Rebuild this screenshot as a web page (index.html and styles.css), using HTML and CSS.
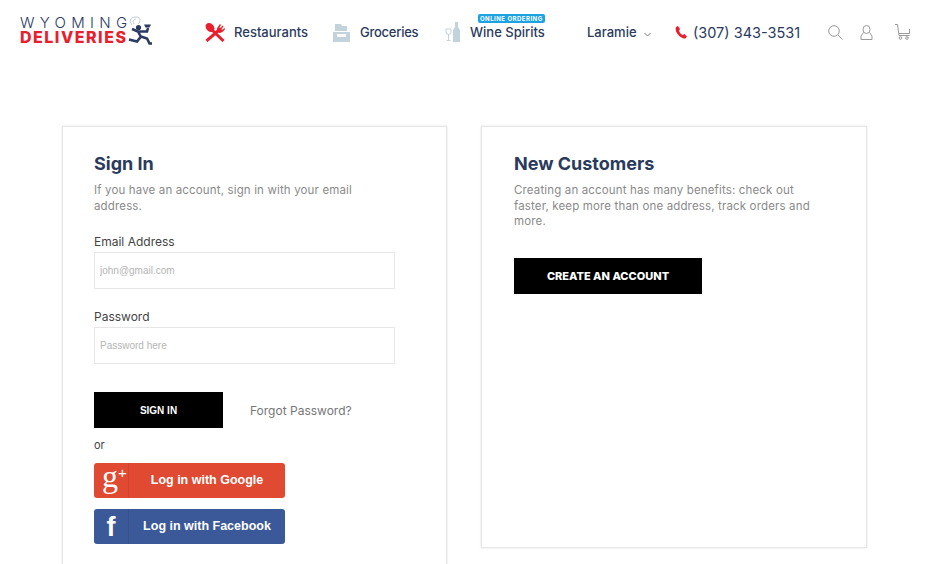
FILE: index.html
```html
<!DOCTYPE html>
<html lang="en">
<head>
    <meta charset="UTF-8">
    <meta name="viewport" content="width=device-width, initial-scale=1.0">
    <title>Wyoming Deliveries - Sign In</title>
    <link rel="stylesheet" href="styles.css">
</head>
<body>
    <div class="header">
        <a class="logo" href="#">
            <span class="logo-text">
                <span class="logo-top">WYOMING</span>
                <span class="logo-bottom">DELIVERIES</span>
            </span>
            <svg class="logo-runner" width="27" height="32" viewBox="0 0 27 32">
                <path d="M6 11C2 5 6 3 10 3C15 3 15 8 12 10M8 10C6 7 8 5 10 5" fill="none" stroke="#c3ccd3"/>
                <circle cx="12.500" cy="13.500" r="2.600" fill="#2a3a63"/>
                <path d="M18 10.500h7l-1.500 3h-4z" fill="#2a3a63"/>
                <path d="M12 17.500L15 23M12 17.500H21L22 14M12 17.500L6 15M15 22.500L21 24.500L23.500 29.500H26M15 22.500L11 27.500L3 25.500" fill="none" stroke="#2a3a63" stroke-width="2.600"/>
            </svg>
        </a>
        <nav class="nav">
            <a class="nav-item nav-restaurants" href="#">
                <svg width="20" height="20" viewBox="0 0 20 20">
                    <path d="M5 6L18.500 19" stroke="#e8202e" stroke-width="3" fill="none"/>
                    <ellipse cx="5" cy="5.500" rx="3.800" ry="5" transform="rotate(-45 5 5.500)" fill="#e8202e"/>
                    <path d="M14 8L1.500 19" stroke="#e8202e" stroke-width="3" fill="none"/>
                    <path d="M12 8.500C11.500 6 13 5 15 2L16 3L14.500 5.500L15.500 6L17.500 3.500L18.500 4.500L16.500 7L17 8L19.500 6L20 7C18 10 16 11 14 11z" fill="#e8202e"/>
                </svg>
                Restaurants
            </a>
            <a class="nav-item nav-groceries" href="#">
                <svg width="17" height="19" viewBox="0 0 17 19">
                    <path d="M2 1h6l1 2h5v5H2z" fill="#c3d3db"/>
                    <path d="M0 9h17v10H0z" fill="#c3d3db"/>
                    <path d="M4 11h9v3H4z" fill="#fff"/>
                </svg>
                Groceries
            </a>
            <a class="nav-item nav-wine" href="#">
                <svg width="16" height="20" viewBox="0 0 16 20">
                    <path d="M1 7h5v3a2.500 2.500 0 0 1-5 0z" fill="none" stroke="#c3d3db"/>
                    <path d="M3.500 12v6.500M1.500 18.500h4" stroke="#c3d3db" fill="none"/>
                    <path d="M10 0h3v5l2 3v12H8V8l2-3z" fill="#c3d3db"/>
                </svg>
                <span class="wine-label">
                    <span class="badge">ONLINE ORDERING</span>
                    Wine Spirits
                </span>
            </a>
        </nav>
        <a class="city" href="#">
            Laramie
            <svg class="city-arrow" width="7" height="5" viewBox="0 0 7 5"><path d="M.5 1l3 3 3-3" fill="none" stroke="#777"/></svg>
        </a>
        <a class="phone" href="#">
            <svg width="12" height="13" viewBox="0 0 12 13">
                <path d="M1 1l2-1 2 3-1 2c.5 1.500 2 3 3.500 4l2-1 2.500 2.500-1.500 2C6 13-1 6 1 1z" fill="#e8202e"/>
            </svg>
            (307) 343-3531
        </a>
        <div class="header-icons">
            <svg width="15" height="15" viewBox="0 0 15 15">
                <circle cx="6" cy="6" r="5.300" fill="none" stroke="#999"/>
                <path d="M10 10l4.500 4.500" stroke="#999" fill="none"/>
            </svg>
            <svg width="13" height="15" viewBox="0 0 13 15">
                <ellipse cx="6.500" cy="4.500" rx="3.500" ry="4" fill="none" stroke="#999"/>
                <path d="M3.500 7.500L1 11v3.500h11V11L9.500 7.500" fill="none" stroke="#999"/>
            </svg>
            <svg class="cart-icon" width="15" height="16" viewBox="0 0 15 16">
                <path d="M0 .5h2.500l1.500 11h10.500M4 9.500h10.500V5" fill="none" stroke="#999"/>
                <circle cx="5.500" cy="14" r="1.300" fill="none" stroke="#999"/>
                <circle cx="12" cy="14" r="1.300" fill="none" stroke="#999"/>
            </svg>
        </div>
    </div>

    <div class="account">
        <div class="card card-signin">
            <h2>Sign In</h2>
            <p class="intro">If you have an account, sign in with your email address.</p>
            <div class="field">
                <label for="email">Email Address</label>
                <input type="text" id="email" placeholder="john@gmail.com">
            </div>
            <div class="field">
                <label for="password">Password</label>
                <input type="text" id="password" placeholder="Password here">
            </div>
            <div class="signin-row">
                <button class="btn btn-signin">SIGN IN</button>
                <a class="forgot" href="#">Forgot Password?</a>
            </div>
            <div class="or">or</div>
            <a class="social social-google" href="#">
                <span class="social-icon google-icon">g<sup>+</sup></span>
                <span class="social-text">Log in with Google</span>
            </a>
            <a class="social social-facebook" href="#">
                <span class="social-icon facebook-icon">f</span>
                <span class="social-text">Log in with Facebook</span>
            </a>
        </div>
        <div class="card card-new">
            <h2>New Customers</h2>
            <p class="intro">Creating an account has many benefits: check out faster, keep more than one address, track orders and more.</p>
            <button class="btn btn-create">CREATE AN ACCOUNT</button>
        </div>
    </div>
</body>
</html>
```

FILE: styles.css
```css
html, body {
    height: 564px;
    overflow: hidden;
}

body {
    font-family: Inter, 'Open Sans', sans-serif;
    margin: 0;
    padding: 0;
    color: #2a3a5c;
    background-color: #fff;
}

a {
    color: inherit;
    text-decoration: none;
}

.header {
    display: flex;
    align-items: center;
    height: 64px;
    padding-left: 20px;
}

.logo {
    display: flex;
    align-items: center;
    width: 185px;
    margin-bottom: 4px;
}

.logo-text {
    display: flex;
    flex-direction: column;
    line-height: 15px;
}

.logo-top {
    font-size: 15px;
    font-weight: 300;
    letter-spacing: 5.300px;
    color: #2a3a63;
}

.logo-bottom {
    font-size: 16px;
    font-weight: 800;
    letter-spacing: 1.500px;
    color: #e8202e;
}

.logo-runner {
    margin-left: -6px;
}

.nav {
    display: flex;
    align-items: center;
}

.nav-item {
    display: flex;
    align-items: center;
    gap: 9px;
    font-size: 13px;
    font-weight: 500;
    white-space: nowrap;
}

.nav-restaurants {
    width: 128px;
}

.nav-groceries {
    width: 112px;
    gap: 10px;
    letter-spacing: -.25px;
}

.nav-wine {
    width: 142px;
}

.wine-label {
    position: relative;
}

.badge {
    position: absolute;
    left: 8px;
    top: -10px;
    background-color: #1ca3e3;
    color: #fff;
    font-size: 6px;
    font-weight: 700;
    letter-spacing: .5px;
    line-height: 9px;
    padding: 0 2px;
    border-radius: 2px;
}

.city {
    display: flex;
    align-items: center;
    gap: 7px;
    width: 88px;
    font-size: 13px;
    font-weight: 500;
}

.city-arrow {
    margin-top: 4px;
}

.phone {
    display: flex;
    align-items: center;
    gap: 6px;
    width: 153px;
    font-size: 14.500px;
}

.header-icons {
    display: flex;
    align-items: center;
    gap: 17px;
}

.cart-icon {
    margin-left: 5px;
}

.account {
    display: grid;
    grid-template-columns: 385px 386px;
    gap: 34px;
    align-items: start;
    padding: 62px 0 0 62px;
}

.card {
    box-sizing: border-box;
    padding: 26px 32px;
    border: 1px solid #e6e6e6;
    box-shadow: 0 0 2px rgba(0, 0, 0, .12);
}

.card-signin {
    height: 480px;
    padding-left: 31px;
}

.card-new {
    height: 422px;
}

.card h2 {
    margin: 0 0 8px 0;
    font-size: 18px;
    font-weight: 700;
    line-height: 22px;
}

.intro {
    margin: 0;
    font-size: 11.500px;
    letter-spacing: .15px;
    line-height: 15.500px;
    color: #8a8a8a;
}

.card-signin .intro {
    max-width: 280px;
}

.card-new .intro {
    max-width: 300px;
}

.field {
    margin-top: 20px;
}

.field label {
    display: block;
    margin-bottom: 2px;
    font-size: 12px;
    line-height: 16px;
    color: #444;
}

.field input {
    display: block;
    box-sizing: border-box;
    width: 301px;
    height: 37px;
    padding: 0 5px 1px;
    border: 1px solid #e6e6e6;
    font-family: 'Liberation Sans', sans-serif;
    font-size: 10px;
}

.field input::placeholder {
    color: #b5b5b5;
}

.signin-row {
    display: flex;
    align-items: center;
    gap: 27px;
    margin-top: 28px;
}

.btn {
    display: block;
    height: 36px;
    border: none;
    background-color: #000;
    color: #fff;
    font-weight: 700;
    cursor: pointer;
}

.btn-signin {
    width: 129px;
    font-family: 'Liberation Sans', sans-serif;
    font-size: 10px;
}

.forgot {
    font-size: 12px;
    color: #777;
}

.or {
    margin: 10px 0 10px 0;
    font-size: 11px;
    line-height: 15px;
    color: #444;
}

.social {
    display: flex;
    align-items: center;
    width: 191px;
    height: 35px;
    margin-bottom: 11px;
    border-radius: 3px;
    color: #fff;
    font-family: 'Liberation Sans', sans-serif;
    font-weight: 700;
    font-size: 12.500px;
}

.social-google {
    background-color: #e04a32;
}

.social-facebook {
    background-color: #3b5998;
}

.social-icon {
    box-sizing: border-box;
    width: 35px;
    height: 35px;
    border-right: 1px solid rgba(0, 0, 0, .08);
    white-space: nowrap;
}

.google-icon {
    padding-left: 8px;
    font-family: 'Liberation Serif', serif;
    font-size: 32px;
    font-weight: 400;
    line-height: 26px;
}

.google-icon sup {
    font-family: 'Liberation Sans', sans-serif;
    font-size: 15px;
    line-height: 0;
    vertical-align: 9px;
}

.facebook-icon {
    font-size: 27px;
    line-height: 37px;
    text-align: center;
}

.social-text {
    flex: 1;
    padding-bottom: 2px;
    text-align: center;
}

.btn-create {
    width: 188px;
    margin-top: 28px;
    font-family: Inter, sans-serif;
    font-size: 11px;
    font-weight: 800;
}
```
